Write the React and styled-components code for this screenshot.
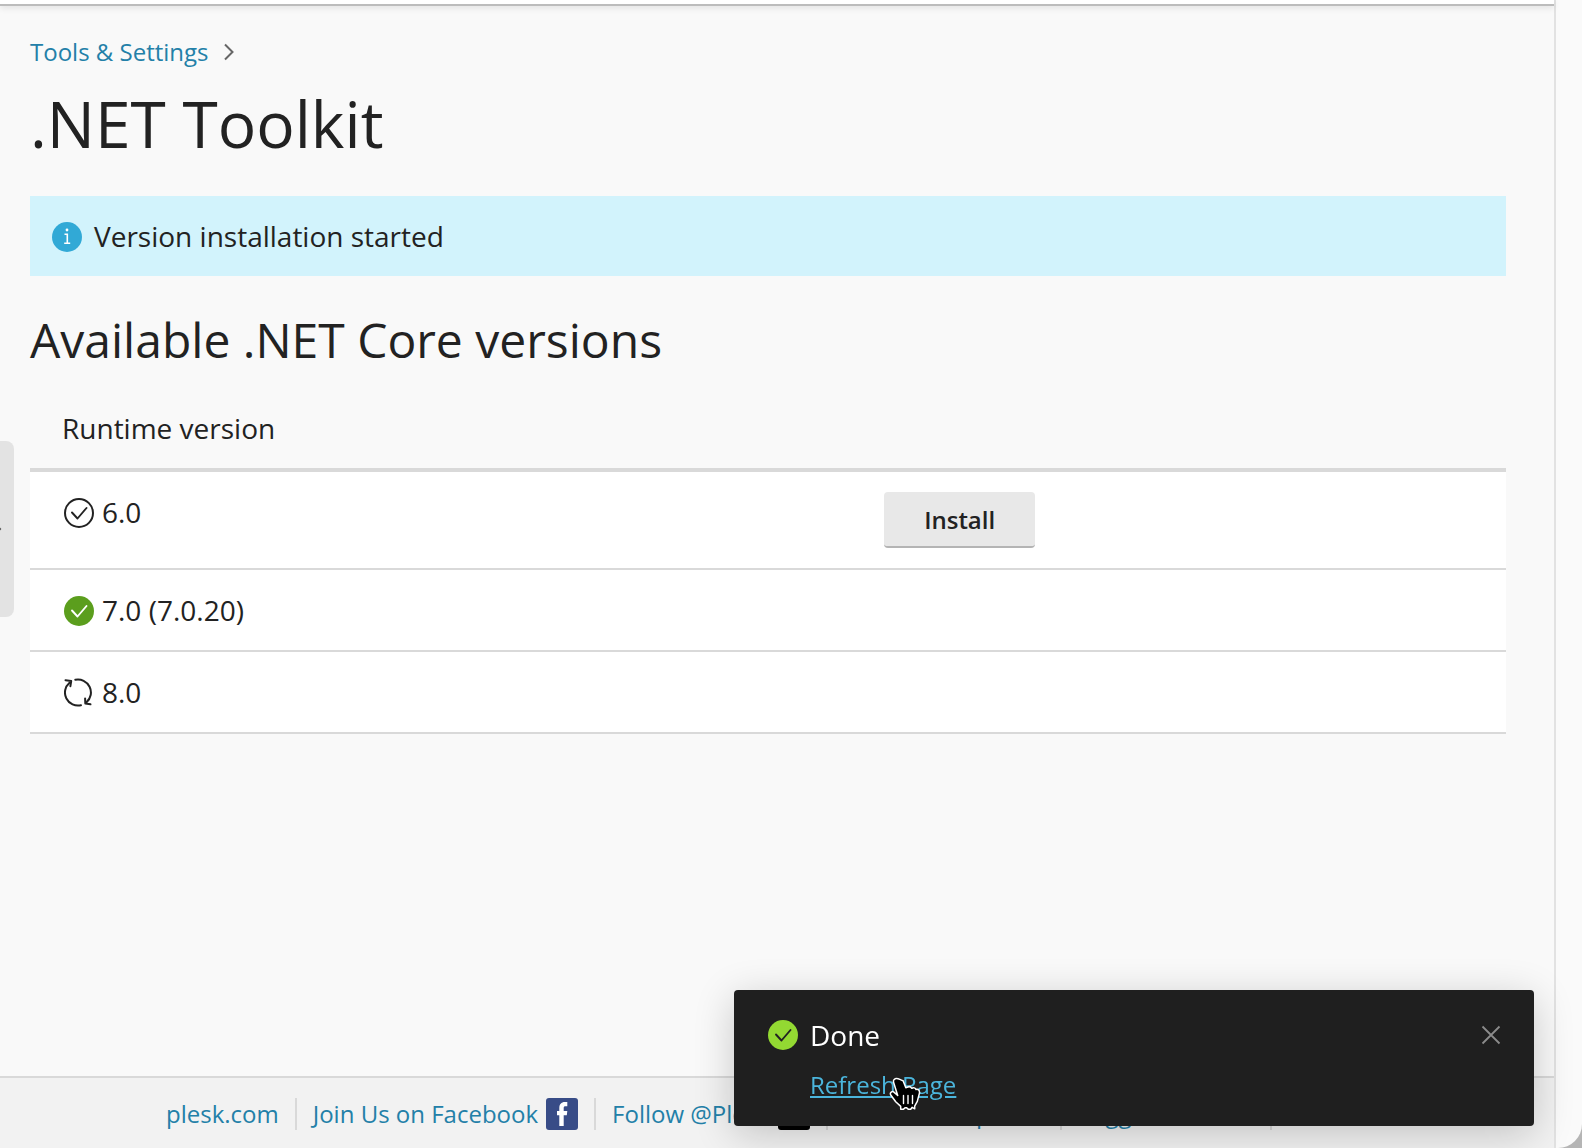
import React from 'react'
import styled, { createGlobalStyle, css } from 'styled-components'

const versions = [
  { id: 1, title: '6.0', status: 'available', canInstall: true },
  { id: 2, title: '7.0 (7.0.20)', status: 'installed' },
  { id: 3, title: '8.0', status: 'updating' },
]

const footerLinks = [
  { id: 1, text: 'plesk.com' },
  { id: 2, text: 'Join Us on Facebook', icon: 'facebook' },
  { id: 3, text: 'Follow @Plesk', icon: 'x' },
  { id: 4, text: 'Ask Our Help Line' },
  { id: 5, text: 'Suggest an Idea' },
  { id: 6, text: 'Feedback' },
]

// ==== ICONS
const CheckIcon = ({ fill = 'none', ring, tick }) => (
  <Icon viewBox='0 0 30 30' aria-hidden='true'>
    <circle cx='15' cy='15' r={ring ? 14 : 15} fill={fill} stroke={ring} strokeWidth='2' />
    <path d='M8 14.5l5.5 6L22.5 10' fill='none' stroke={tick} strokeWidth='1.9' strokeLinecap='round' strokeLinejoin='round' />
  </Icon>
)

const InfoIcon = () => (
  <Icon viewBox='0 0 30 30' aria-hidden='true'>
    <circle cx='15' cy='15' r='15' fill='#31a9d6' />
    <circle cx='15' cy='8' r='1.4' fill='#fff' />
    <path d='M12.5 12.3h2.8V21M12.2 21.2h6' fill='none' stroke='#fff' strokeWidth='1.6' />
  </Icon>
)

const UpdateIcon = () => (
  <Icon viewBox='0 0 30 30' aria-hidden='true'>
    <g fill='none' stroke='#222' strokeWidth='2' strokeLinecap='round' strokeLinejoin='round'>
      <path d='M11.3 1.800A13 13 0 0 1 22.500 24.300' />
      <path d='M17 27.200A13 13 0 0 1 5.500 4.700' />
      <path d='M1.500 2.200L7.200 3l-.8 5.200' />
      <path d='M26.500 26.300l-5.200-.9-.2-5' />
    </g>
  </Icon>
)

const statusIcons = {
  available: <CheckIcon ring='#222' tick='#222' />,
  installed: <CheckIcon fill='#5b9e1d' tick='#fff' />,
  updating: <UpdateIcon />,
}

const socialIcons = {
  facebook: (
    <SocialIcon viewBox='0 0 32 32'>
      <rect width='32' height='32' rx='3' fill='#384c87' />
      <path d='M13.300 28V17.300H11V13h2.300v-2.800C13.300 6.300 15.100 4 19 4h2.300v4.300h-1.700c-1.500 0-1.900.6-1.900 1.900V13h3.600l-.5 4.300h-3.100V28z' fill='#fff' />
    </SocialIcon>
  ),
  x: (
    <SocialIcon viewBox='0 0 32 32'>
      <rect width='32' height='32' rx='3' fill='#000' />
      <path d='M8 8l16 16M24 8L8 24' stroke='#fff' strokeWidth='2' />
    </SocialIcon>
  ),
}

function SocialIcon({ children, viewBox }) {
  return (
    <svg width='32' height='32' viewBox={viewBox} aria-hidden='true'>
      {children}
    </svg>
  )
}

const App = () => {
  return (
    <>
      <GlobalStyle />
      <Window>
        <Page>
          <Topbar />
          <SidebarToggle type='button' aria-label='Toggle sidebar'>
            <svg width='6' height='12' viewBox='0 0 6 12' aria-hidden='true'>
              <path d='M-5 11l5-5-5-5' fill='none' stroke='#555' strokeWidth='2' />
            </svg>
          </SidebarToggle>
          <Content>
            <Breadcrumbs aria-label='Breadcrumb'>
              <Link href='#tools'>Tools &amp; Settings</Link>
              <svg width='12' height='18' viewBox='0 0 12 18' aria-hidden='true'>
                <path d='M2 1.500L9.500 9 2 16.500' fill='none' stroke='#666' strokeWidth='2' />
              </svg>
            </Breadcrumbs>
            <Title>.NET Toolkit</Title>
            <Alert role='status'>
              <InfoIcon />
              Version installation started
            </Alert>
            <Subtitle>Available .NET Core versions</Subtitle>
            {/* ====VERSIONS */}
            <Table>
              <thead>
                <tr>
                  <HeadCell scope='col'>Runtime version</HeadCell>
                  <HeadCell as='td' />
                </tr>
              </thead>
              <tbody>
                {versions.map((item) => (
                  <Row key={item.id}>
                    <Cell>
                      <Version>
                        {statusIcons[item.status]}
                        {item.title}
                      </Version>
                    </Cell>
                    <Cell>
                      {item.canInstall && <Button type='button'>Install</Button>}
                    </Cell>
                  </Row>
                ))}
              </tbody>
            </Table>
          </Content>
          {/* ====FOOTER */}
          <Footer>
            <FooterList>
              {footerLinks.map((item) => (
                <FooterItem key={item.id}>
                  <Link href='#footer'>{item.text}</Link>
                  {socialIcons[item.icon]}
                </FooterItem>
              ))}
            </FooterList>
          </Footer>
        </Page>
      </Window>
      {/* ====TOAST */}
      <Toast role='alert'>
        <CheckIcon fill='#93d932' tick='#222' />
        <ToastBody>
          <div>Done</div>
          <ToastLink href='#refresh'>Refresh Page</ToastLink>
        </ToastBody>
        <CloseButton type='button' aria-label='Close'>
          <svg width='20' height='20' viewBox='0 0 20 20' aria-hidden='true'>
            <path d='M1.500 1.500l17 17M18.500 1.500l-17 17' stroke='#8c8c8c' strokeWidth='1.800' />
          </svg>
        </CloseButton>
        <Pointer viewBox='0 0 32 34' aria-hidden='true'>
          <path
            d='M7 1.500c-2.300.4-2.900 2.300-2.300 4.300l4 12.700-3.800-3.400c-1.700-1.300-4.300.2-3.300 2.600l5.100 7.100 5 4.600v2.900h2.500l1.800-1.500h1.700l1.800 1.500h2.200l1.500-2 2.500 1.500v-2.700l2.600-4.700 2.200-8.400c.2-2.600-1.200-4.100-3.500-3.500-.5-1.700-2.700-2.300-4.200-1.200-1-1.500-3-2-4.700-1l-1.300.4-2.700-6.900C10.200 2.200 9 1.200 7 1.500z'
            fill='#000'
            stroke='#fff'
            strokeWidth='1.500'
            strokeLinejoin='round'
          />
          <path d='M14.500 18.500v8M19 18.500v8M23.500 18.500v8' stroke='#fff' strokeWidth='1.400' strokeLinecap='round' />
        </Pointer>
      </Toast>
    </>
  )
}

const GlobalStyle = createGlobalStyle`
  * {
    box-sizing: border-box;
  }
  body {
    margin: 0;
    background: #b5b5b5;
    color: #222;
    font-family: 'Open Sans', 'Noto Sans', sans-serif;
    font-size: 28px;
    line-height: 40px;
  }
`
const focusRing = css`
  &:focus-visible {
    outline: 2px solid #31a9d6;
  }
`
const Window = styled.div`
  display: flex;
  min-height: 100vh;
  padding-right: 26px;
  background: #fafafa;
  border-bottom-right-radius: 24px;
`
const Page = styled.div`
  position: relative;
  display: flex;
  flex: 1;
  flex-direction: column;
  min-width: 0;
  background: #f9f9f9;
  border-right: 2px solid #e2e2e2;
`
const Topbar = styled.header`
  height: 6px;
  background: #fff;
  border-bottom: 2px solid #bcbcbc;
  box-shadow: 0 2px 6px rgba(0, 0, 0, 0.1);
`
const SidebarToggle = styled.button`
  position: absolute;
  top: 441px;
  left: 0;
  display: flex;
  align-items: center;
  width: 14px;
  height: 176px;
  padding: 0;
  background: #e3e3e3;
  border: 0;
  border-radius: 0 8px 8px 0;
  ${focusRing}
`
const Content = styled.main`
  flex: 1;
  padding: 30px 48px 30px 30px;
`
const Icon = styled.svg`
  flex: none;
  width: 30px;
  height: 30px;
  margin-top: 2px;
`
const Link = styled.a`
  color: #2380a8;
  text-decoration: none;
  ${focusRing}
`
const Breadcrumbs = styled.nav`
  display: flex;
  align-items: center;
  gap: 14px;
  font-size: 24px;
  line-height: 32px;
`
const Title = styled.h1`
  margin: 16px 0 32px;
  font-size: 64px;
  font-weight: 400;
  line-height: 80px;
`
const Alert = styled.div`
  display: flex;
  align-items: center;
  gap: 12px;
  padding: 20px 22px;
  background: #d2f3fc;
`
const Subtitle = styled.h2`
  margin: 32px 0 16px;
  font-size: 48px;
  font-weight: 400;
  line-height: 64px;
`
const Table = styled.table`
  width: 100%;
  table-layout: fixed;
  border-spacing: 0;
`
const HeadCell = styled.th`
  padding: 20px 32px;
  border-bottom: 4px solid #d9d9d9;
  font-weight: 400;
  text-align: left;

  &:first-child {
    width: 55.7%;
  }
`
const Row = styled.tr`
  background: #fff;
`
const Cell = styled.td`
  padding: 20px 32px;
  border-bottom: 2px solid #d9d9d9;
  vertical-align: top;
`
const Version = styled.div`
  display: flex;
  align-items: center;
  gap: 8px;
  padding-left: 2px;
`
const Button = styled.button`
  display: block;
  height: 56px;
  padding: 2px 40px 0;
  background: #e8e8e8;
  border: 0;
  border-bottom: 2px solid #b4b4b4;
  border-radius: 4px;
  color: #222;
  font: 600 24px/32px 'Open Sans', 'Noto Sans', sans-serif;
  ${focusRing}
`
const Footer = styled.footer`
  padding: 20px 150px 18px;
  overflow: hidden;
  background: #f2f2f2;
  border-top: 2px solid #d9d9d9;
  font-size: 24px;
  line-height: 32px;
`
const FooterList = styled.ul`
  display: flex;
  margin: 0;
  padding: 0;
  list-style: none;
  white-space: nowrap;
`
const FooterItem = styled.li`
  display: flex;
  gap: 8px;
  padding: 0 16px;

  & + & {
    border-left: 2px solid #d9d9d9;
  }
`
const Toast = styled.aside`
  position: fixed;
  right: 48px;
  bottom: 22px;
  display: flex;
  align-items: flex-start;
  gap: 12px;
  width: 800px;
  padding: 25px 33px 25px 34px;
  background: #1f1f1f;
  border-radius: 4px;
  box-shadow: 0 8px 40px rgba(0, 0, 0, 0.2);
  color: #fff;

  > ${Icon} {
    margin-top: 5px;
  }
`
const ToastBody = styled.div`
  flex: 1;
`
const ToastLink = styled.a`
  display: block;
  width: fit-content;
  margin-top: 14px;
  color: #4bb5dc;
  font-size: 24px;
  line-height: 32px;
  ${focusRing}
`
const CloseButton = styled.button`
  display: flex;
  padding: 10px 0;
  background: none;
  border: 0;
  ${focusRing}
`
const Pointer = styled.svg`
  position: absolute;
  top: 87px;
  left: 155px;
  width: 32px;
  height: 34px;
`

export default App
